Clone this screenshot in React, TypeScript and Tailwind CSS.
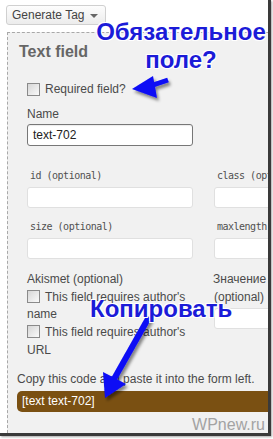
import React from "react";

function Box() {
  return (
    <span className="inline-block w-[13px] h-[13px] align-[-2px] mr-[5px] border border-[#8a8a8a] bg-gradient-to-br from-[#d6d6d6] to-[#fafafa]" />
  );
}

function MonoField({ label }: { label: string }) {
  return (
    <div className="flex flex-col">
      <div className="font-['DejaVu_Sans_Mono',monospace] text-[10px] tracking-[-0.5px] leading-[12px] pl-[3px] text-[#505050]">{label}</div>
      <div className="mt-[5px] h-[21px] border border-[#e0e0e0] rounded-[3px] bg-white" />
    </div>
  );
}

export default function App() {
  return (
    <div className="w-[273px] h-[439px] bg-white relative overflow-hidden font-['Liberation_Sans',Arial,sans-serif]">
      <div className="w-[271px] h-[436px] border-r-[3px] border-b-[3px] border-[#3a3a3a] shadow-[1px_1px_2px_rgba(0,0,0,0.35)] flex flex-col overflow-hidden bg-white">
        <div className="pl-[6px] pt-[5px]">
          <div className="h-[20px] w-[100px] flex items-center pl-[5px] rounded-[3px] border border-[#d0d0d0] bg-gradient-to-b from-[#fdfdfd] to-[#ececec] text-[12px] leading-[18px] text-[#444]">
            <span>Generate Tag</span>
            <span className="ml-[5px] mt-[1px] w-0 h-0 border-l-[4px] border-r-[4px] border-t-[4px] border-l-transparent border-r-transparent border-t-[#666]" />
          </div>
        </div>
        <div className="ml-[7px] mt-[7px] flex-1 border-l border-t border-dashed border-[#a8a8a8] bg-[#f1f1f1] overflow-hidden flex flex-col text-[12px] text-[#4a4a4a]">
          <div className="pl-[11px] pt-[9px] text-[16px] leading-[20px] font-bold text-[#666]">Text field</div>
          <div className="pl-[19px]">
            <div className="mt-[19px] leading-[16px] flex items-center">
              <span className="inline-block w-[13px] h-[13px] mr-[5px] border border-[#8a8a8a] bg-gradient-to-br from-[#d6d6d6] to-[#fafafa]" />
              Required field?
            </div>
            <div className="mt-[9px] leading-[16px]">Name</div>
            <div className="mt-[2px] w-[166px] h-[22px] border border-[#777] rounded-[3px] bg-white pl-[5px] leading-[20px] text-[#222] shadow-[inset_0_1px_1px_rgba(0,0,0,0.08)]">
              text-702
            </div>
            <div className="mt-[24px] grid grid-cols-[166px_166px] gap-x-[21px] w-[353px]">
              <MonoField label="id (optional)" />
              <MonoField label="class (optional)" />
            </div>
            <div className="mt-[13px] grid grid-cols-[166px_166px] gap-x-[21px] w-[353px]">
              <MonoField label="size (optional)" />
              <MonoField label="maxlength (optional)" />
            </div>
            <div className="mt-[12px] grid grid-cols-[166px_166px] gap-x-[21px] w-[353px] leading-[17.7px]">
              <div>
                <div>Akismet (optional)</div>
                <div>
                  <Box />This field requires author's name
                </div>
                <div>
                  <Box />This field requires author's URL
                </div>
              </div>
              <div className="flex flex-col">
                <div className="-ml-[1px]">Значение по умолчанию</div>
                <div>(optional)</div>
                <div className="mt-[2px] h-[21px] border border-[#e0e0e0] rounded-[3px] bg-white" />
              </div>
            </div>
          </div>
          <div className="pl-[9px]">
            <div className="mt-[11.5px] leading-[16px] whitespace-nowrap">Copy this code and paste it into the form left.</div>
            <div className="mt-[4px] h-[21px] rounded-l-[5px] bg-[#7a5012] text-white leading-[21px] pl-[5px]">[text text-702]</div>
            <div className="mt-[3.5px] text-right pr-[3px] text-[16px] leading-[18px] text-[#a3a3a3]">WPnew.ru</div>
          </div>
        </div>
      </div>

      <svg className="absolute left-0 top-0 pointer-events-none" width="273" height="439" viewBox="0 0 273 439">
        <defs>
          <filter id="sh" x="-20%" y="-20%" width="140%" height="140%">
            <feDropShadow dx="2" dy="3" stdDeviation="1.5" floodColor="#000" floodOpacity="0.45" />
          </filter>
        </defs>
        <g filter="url(#sh)" fill="#0a0af5" stroke="#0a0af5">
          <line x1="168" y1="80" x2="150" y2="86" strokeWidth="5" />
          <polygon points="132,89 153,76 157,98" strokeWidth="0" />
          <line x1="149" y1="317" x2="114" y2="379" strokeWidth="6" />
          <polygon points="105,398 103,372 126,384" strokeWidth="0" />
        </g>
      </svg>

      <div className="absolute left-[95px] top-[18px] w-[172px] text-center text-[24px] leading-[28px] font-bold text-[#1b1bd8] whitespace-nowrap [text-shadow:1px_1px_0_#fff,-1px_-1px_0_#fff,1px_-1px_0_#fff,-1px_1px_0_#fff]">
        Обязательное
        <br />
        поле?
      </div>
      <div className="absolute left-[90px] top-[295px] text-[24px] leading-[27px] font-bold text-[#1b1bd8] whitespace-nowrap [text-shadow:1px_1px_0_#fff,-1px_-1px_0_#fff,1px_-1px_0_#fff,-1px_1px_0_#fff]">
        Копировать
      </div>
    </div>
  );
}
